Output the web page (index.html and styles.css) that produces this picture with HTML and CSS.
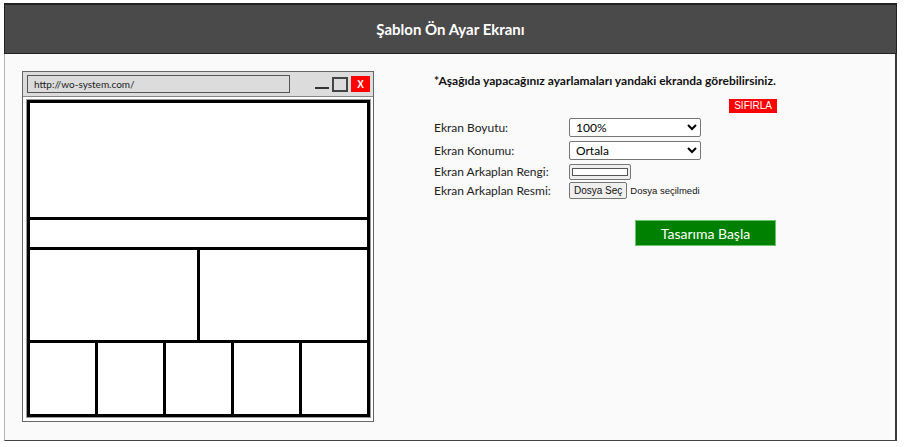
FILE: index.html
```html
<!DOCTYPE html>
<html lang="tr">
<head>
<meta charset="utf-8">
<title>Şablon Ön Ayar Ekranı</title>
<link rel="stylesheet" href="styles.css">
</head>
<body>
<div class="page">
  <div class="header">Şablon Ön Ayar Ekranı</div>
  <div class="content">
    <div class="mock">
      <div class="titlebar">
        <div class="address">http://wo-system.com/</div>
        <div class="winbtns">
          <span class="min"></span>
          <span class="max"></span>
          <span class="close">X</span>
        </div>
      </div>
      <div class="viewport">
        <div class="frame">
          <div class="row r1"></div>
          <div class="row r2"></div>
          <div class="row r3"><div class="cell"></div><div class="cell"></div></div>
          <div class="row r4"><div class="cell"></div><div class="cell"></div><div class="cell"></div><div class="cell"></div><div class="cell"></div></div>
        </div>
      </div>
    </div>
    <div class="panel">
      <p class="note">*Aşağıda yapacağınız ayarlamaları yandaki ekranda görebilirsiniz.</p>
      <div class="reset-row"><button class="reset">SIFIRLA</button></div>
      <div class="form">
        <div class="frow sel"><label>Ekran Boyutu:</label><select><option>100%</option></select></div>
        <div class="frow sel"><label>Ekran Konumu:</label><select><option>Ortala</option></select></div>
        <div class="frow"><label>Ekran Arkaplan Rengi:</label><span class="color"><span class="swatch"></span></span></div>
        <div class="frow"><label>Ekran Arkaplan Resmi:</label><span class="file"><span class="filebtn">Dosya Seç</span><span class="filetxt">Dosya seçilmedi</span></span></div>
      </div>
      <div class="start-row"><button class="start">Tasarıma Başla</button></div>
    </div>
  </div>
</div>
</body>
</html>
```

FILE: styles.css
```css
html, body { margin: 0; padding: 0; background: #ffffff; }
body { font-family: Lato, "Open Sans", sans-serif; color: #111; }
.page { margin: 3px 0 0 4px; width: 893px; }
.header {
  height: 48px; background: #4a4a4a; border: 1px solid #222; border-top-width: 2px;
  color: #fff; font-weight: bold; font-size: 15px;
  display: flex; align-items: center; justify-content: center;
}
.content {
  height: 386px; background: #fafafa;
  border-left: 1px solid #b5b5b5; border-right: 2px solid #3a3a3a; border-bottom: 1px solid #444;
  display: flex; align-items: flex-start;
}
.mock {
  margin: 17px 0 0 17px; width: 350px; height: 349px;
  border: 1px solid #666; background: #fff; display: flex; flex-direction: column;
}
.titlebar {
  height: 24px; background: #dcdcdc; border-bottom: 1px solid #888;
  display: flex; align-items: center; padding: 0 3px 0 4px;
}
.address {
  width: 255px; height: 16px; border: 1px solid #555; background: #dcdcdc;
  font-size: 10px; line-height: 16px; padding-left: 6px; box-sizing: content-box; color: #222;
}
.winbtns { margin-left: auto; display: flex; align-items: center; gap: 3px; }
.min { width: 14px; height: 2px; background: #333; margin-top: 7px; }
.max { width: 12px; height: 11px; border: 2px solid #444; }
.close {
  width: 19px; height: 16px; background: #f00; color: #fff; font-size: 10px; font-weight: bold;
  display: flex; align-items: center; justify-content: center; font-family: "Liberation Sans", sans-serif;
}
.viewport { flex: 1; padding: 3px 3px 4px 4px; }
.frame {
  height: 100%; box-sizing: border-box; border: 3px solid #000; outline: 1px solid #999;
  display: flex; flex-direction: column;
}
.row { display: flex; }
.row + .row { border-top: 3px solid #000; }
.r1 { height: 114px; }
.r2 { height: 27px; }
.r3 { height: 90px; }
.r4 { flex: 1; }
.cell { flex: 1; }
.cell + .cell { border-left: 3px solid #000; }
.panel { margin: 19px 0 0 60px; width: 342px; display: flex; flex-direction: column; }
.note { margin: 0; font-size: 12px; font-weight: bold; color: #111; white-space: nowrap; }
.reset-row { display: flex; justify-content: flex-end; margin-top: 11px; }
.reset {
  background: #f00; color: #fff; border: 0; padding: 0 5px; height: 14px; font-size: 10px;
  font-family: "Liberation Sans", Arial, sans-serif; line-height: 14px; margin-right: -1px;
}
.form { display: flex; flex-direction: column; margin-top: 3px; }
.frow { display: flex; align-items: center; height: 19px; }
.frow.sel { height: 23px; }
.frow label { width: 135px; font-size: 12px; color: #222; }
select {
  width: 132px; height: 19px; font-size: 12px; font-family: Lato, "Open Sans", sans-serif;
  border: 1px solid #767676; border-radius: 2px; background: #fff; padding: 0 0 0 2px; color: #000;
}
.color {
  width: 60px; height: 14px; border: 1px solid #767676; border-radius: 2px; background: #efefef;
  display: flex; align-items: center; justify-content: center;
}
.swatch { width: 54px; height: 6px; border: 1px solid #555; background: #fff; }
.file { display: flex; align-items: center; font-size: 10px; font-family: "Liberation Sans", sans-serif; }
.filebtn {
  height: 15px; line-height: 15px; padding: 0 4px; border: 1px solid #767676; border-radius: 2px;
  background: #efefef; font-size: 10px;
}
.filetxt { margin-left: 3px; font-size: 9.5px; }
.start-row { display: flex; justify-content: flex-end; margin-top: 20px; }
.start {
  width: 141px; height: 26px; background: #008000; color: #fff; border: 1px solid #6ac36a;
  font-family: Lato, "Open Sans", sans-serif; font-size: 14px; margin-right: 0;
}
```
